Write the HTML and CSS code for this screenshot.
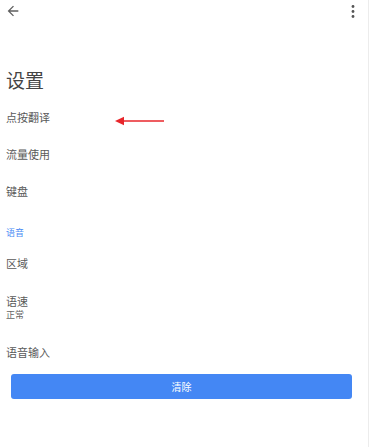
FILE: index.html
```html
<!DOCTYPE html>
<html lang="zh-CN">
<head>
<meta charset="utf-8">
<link rel="stylesheet" href="styles.css">
</head>
<body>
<div class="app">
  <div class="topbar">
    <svg class="back" width="16" height="16" viewBox="0 0 24 24"><path d="M20 11H7.83l5.59-5.59L12 4l-8 8 8 8 1.41-1.41L7.83 13H20v-2z" fill="#5f5f5f"/></svg>
    <svg class="more" width="4" height="13" viewBox="0 0 4 13"><circle cx="2" cy="1.5" r="1.4" fill="#555"/><circle cx="2" cy="6.5" r="1.4" fill="#555"/><circle cx="2" cy="11.5" r="1.4" fill="#555"/></svg>
  </div>
  <h1 class="title">设置</h1>
  <div class="list">
    <div class="item">点按翻译</div>
    <div class="item">流量使用</div>
    <div class="item">键盘</div>
    <div class="category">语音</div>
    <div class="item item-region">区域</div>
    <div class="item item-two">
      <div class="item-label">语速</div>
      <div class="item-sub">正常</div>
    </div>
    <div class="item">语音输入</div>
  </div>
  <div class="actions">
    <button class="btn">清除</button>
  </div>
  <svg class="annot" width="50" height="10" viewBox="0 0 50 10"><path d="M8 5H49" stroke="#e8262b" stroke-width="1.6"/><path d="M0 5L9 0.8V9.2Z" fill="#e8262b"/></svg>
</div>
</body>
</html>
```
FILE: styles.css
```css
* { box-sizing: border-box; }
html, body { margin: 0; padding: 0; background: #fff; }
body { font-family: "Noto Sans CJK SC", "Noto Sans", sans-serif; color: #5a5a5a; }
.app {
  position: relative;
  width: 369px;
  height: 447px;
  border-right: 1px solid #ececec;
}
.topbar {
  height: 22px;
  display: flex;
  align-items: center;
  justify-content: space-between;
  padding: 0 13px 0 5px;
}
.back { display: block; }
.more { display: block; }
.title {
  margin: 46px 0 0 6px;
  font-size: 19px;
  line-height: 24px;
  font-weight: 400;
  color: #444;
  height: 24px;
}
.list { padding-top: 6px; }
.item {
  height: 37px;
  display: flex;
  align-items: center;
  padding-left: 6px;
  font-size: 11px;
  line-height: 14px;
}
.category {
  height: 35px;
  padding: 18px 0 0 6px;
  font-size: 9px;
  line-height: 12px;
  color: #4a8af4;
}
.item-region { height: 38px; }
.item.item-two {
  height: 51px;
  flex-direction: column;
  align-items: flex-start;
  justify-content: flex-start;
  padding-top: 12px;
}
.item-label { font-size: 11px; line-height: 14px; }
.item-sub { font-size: 9px; line-height: 12px; margin-top: 1px; color: #666; }
.actions { padding: 4px 16px 0 11px; }
.btn {
  display: block;
  width: 100%;
  height: 25px;
  border: none;
  border-radius: 3px;
  background: #4487f4;
  color: #fff;
  font-family: "Noto Sans CJK SC", sans-serif;
  font-size: 10px;
  padding: 0;
}
.annot {
  position: absolute;
  left: 115px;
  top: 116px;
}
```
